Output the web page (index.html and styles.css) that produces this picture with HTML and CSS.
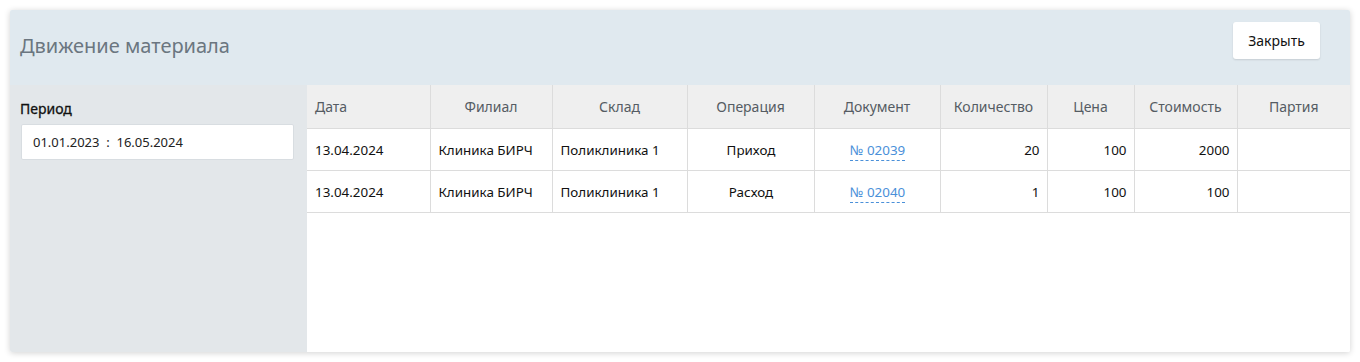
FILE: index.html
```html
<!DOCTYPE html>
<html lang="ru">
<head>
<meta charset="utf-8">
<link rel="stylesheet" href="styles.css">
</head>
<body>
<div class="panel">
  <div class="panel-head">
    <h1 class="title">Движение материала</h1>
    <button class="btn">Закрыть</button>
  </div>
  <div class="panel-body">
    <aside class="sidebar">
      <div class="label">Период</div>
      <div class="period">01.01.2023&nbsp;&nbsp;:&nbsp;&nbsp;16.05.2024</div>
    </aside>
    <main class="content">
      <table class="grid">
        <colgroup>
          <col style="width:123px"><col style="width:122px"><col style="width:135px"><col style="width:127px"><col style="width:126px"><col style="width:107px"><col style="width:87px"><col style="width:103px"><col>
        </colgroup>
        <thead>
          <tr>
            <th class="l">Дата</th>
            <th>Филиал</th>
            <th>Склад</th>
            <th>Операция</th>
            <th>Документ</th>
            <th>Количество</th>
            <th>Цена</th>
            <th>Стоимость</th>
            <th>Партия</th>
          </tr>
        </thead>
        <tbody>
          <tr>
            <td>13.04.2024</td>
            <td>Клиника БИРЧ</td>
            <td>Поликлиника 1</td>
            <td class="c">Приход</td>
            <td class="c"><a class="doc">№ 02039</a></td>
            <td class="r">20</td>
            <td class="r">100</td>
            <td class="r">2000</td>
            <td></td>
          </tr>
          <tr>
            <td>13.04.2024</td>
            <td>Клиника БИРЧ</td>
            <td>Поликлиника 1</td>
            <td class="c">Расход</td>
            <td class="c"><a class="doc">№ 02040</a></td>
            <td class="r">1</td>
            <td class="r">100</td>
            <td class="r">100</td>
            <td></td>
          </tr>
        </tbody>
      </table>
    </main>
  </div>
</div>
</body>
</html>
```

FILE: styles.css
```css
html, body {
  margin: 0;
  padding: 0;
  background: #ffffff;
}
body {
  padding: 10px 10px 10px 10px;
  font-family: "Noto Sans", "Open Sans", sans-serif;
  color: #111;
}
.panel {
  width: 1340px;
  height: 342px;
  display: flex;
  flex-direction: column;
  box-shadow: 0 1px 6px rgba(0,0,0,0.18);
  border-radius: 2px;
  overflow: hidden;
}
.panel-head {
  height: 75px;
  background: #e0e9ef;
  display: flex;
  align-items: flex-start;
  justify-content: space-between;
  flex-shrink: 0;
}
.title {
  margin: 23px 0 0 10px;
  font-size: 20px;
  font-weight: 400;
  color: #6b7680;
  line-height: 26px;
}
.btn {
  margin: 12px 30px 0 0;
  width: 87px;
  height: 37px;
  border: none;
  background: #fff;
  border-radius: 3px;
  box-shadow: 0 1px 2px rgba(0,0,0,0.12);
  font-family: inherit;
  font-size: 14px;
  color: #111;
  padding: 0;
}
.panel-body {
  flex: 1;
  display: flex;
}
.sidebar {
  width: 297px;
  background: #e3e7ea;
  padding: 14px 13px 0 11px;
  box-sizing: border-box;
  flex-shrink: 0;
}
.label {
  font-size: 14px;
  font-weight: 400;
  color: #111;
  line-height: 20px;
  margin: 0 0 5px -1px;
  -webkit-text-stroke: 0.3px #111;
}
.period {
  height: 36px;
  box-sizing: border-box;
  background: #fff;
  border: 1px solid #d8dde1;
  border-radius: 2px;
  padding: 0 11px;
  line-height: 34px;
  font-size: 13px;
  color: #222;
}
.content {
  flex: 1;
  background: #fff;
}
.grid {
  width: 100%;
  border-collapse: collapse;
  table-layout: fixed;
  font-size: 13px;
}
.grid th {
  height: 43px;
  background: #efefef;
  font-weight: 400;
  color: #555c63;
  font-size: 14px;
  text-align: center;
  padding: 0 8px;
  border-left: 1px solid #dcdcdc;
  border-bottom: 1px solid #dcdcdc;
}
.grid th.l { text-align: left; }
.grid th:first-child, .grid td:first-child { border-left: none; }
.grid td {
  height: 41px;
  padding: 0 7px 0 8px;
  border-left: 1px solid #dcdcdc;
  border-bottom: 1px solid #dcdcdc;
  color: #111;
  white-space: nowrap;
  font-size: 13.4px;
}
.grid td.c { text-align: center; }
.grid td.r { text-align: right; }
.doc {
  color: #4a90d9;
  text-decoration: none;
  border-bottom: 1px dashed #4a90d9;
  padding-bottom: 1px;
}
```
